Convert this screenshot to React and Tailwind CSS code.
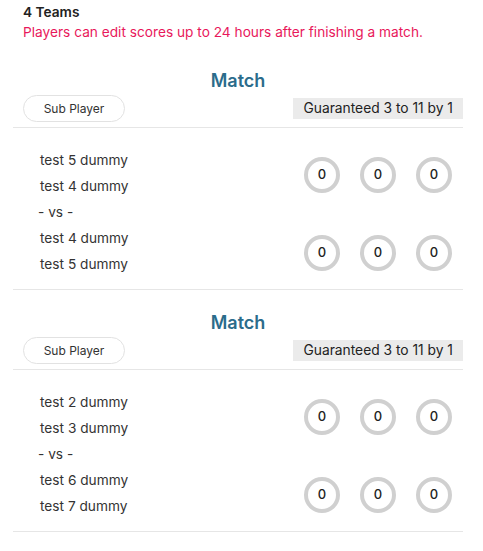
const matches = [
  { teamA: ['test 5 dummy', 'test 4 dummy'], teamB: ['test 4 dummy', 'test 5 dummy'] },
  { teamA: ['test 2 dummy', 'test 3 dummy'], teamB: ['test 6 dummy', 'test 7 dummy'] },
];

const ScoreRow = () => (
  <div className="flex gap-[20px] pt-[4px]">
    {[0, 1, 2].map((i) => (
      <div
        key={i}
        className="w-[36px] h-[36px] rounded-full border-[4px] border-[#d0d0d0] flex items-center justify-center text-[13px] font-medium text-[#222]"
      >
        0
      </div>
    ))}
  </div>
);

const Team = ({ names }) => (
  <div className="flex items-center justify-between">
    <div>
      {names.map((n, i) => (
        <div key={i} className="h-[26px] leading-[26px]">{n}</div>
      ))}
    </div>
    <ScoreRow />
  </div>
);

const Match = ({ match }) => (
  <div className="pt-[19px] border-b border-[#e6e6e6]">
    <div className="h-[28px] leading-[28px] text-center text-[18px] font-semibold text-[#2b6c8b]">Match</div>
    <div className="flex items-center justify-between h-[27px] pl-[10px] box-content pb-[5px] border-b border-[#e6e6e6]">
      <button className="w-[102px] h-[27px] rounded-full border border-[#e2e2e2] bg-white text-[12px] text-[#333]">
        Sub Player
      </button>
      <div className="h-[21px] leading-[21px] bg-[#ebebeb] px-[10px] text-[13.8px] text-[#222]">
        Guaranteed 3 to 11 by 1
      </div>
    </div>
    <div className="pt-[19px] pb-[12px] pl-[27px] pr-[11px] text-[13.7px] text-[#333]">
      <Team names={match.teamA} />
      <div className="h-[26px] leading-[26px] -ml-[2px]">- vs -</div>
      <Team names={match.teamB} />
    </div>
  </div>
);

export default function App() {
  return (
    <div className="min-h-screen bg-white" style={{ fontFamily: 'Inter, "Noto Sans", sans-serif' }}>
      <div className="ml-[13px] w-[450px] pt-[2px]">
        <div className="px-[10px] pb-[6px] text-[13.7px] leading-[20px]">
          <div className="font-semibold text-[#222]">4 Teams</div>
          <div className="text-[#e8185b]">Players can edit scores up to 24 hours after finishing a match.</div>
        </div>
        {matches.map((m, i) => (
          <Match key={i} match={m} />
        ))}
      </div>
    </div>
  );
}
